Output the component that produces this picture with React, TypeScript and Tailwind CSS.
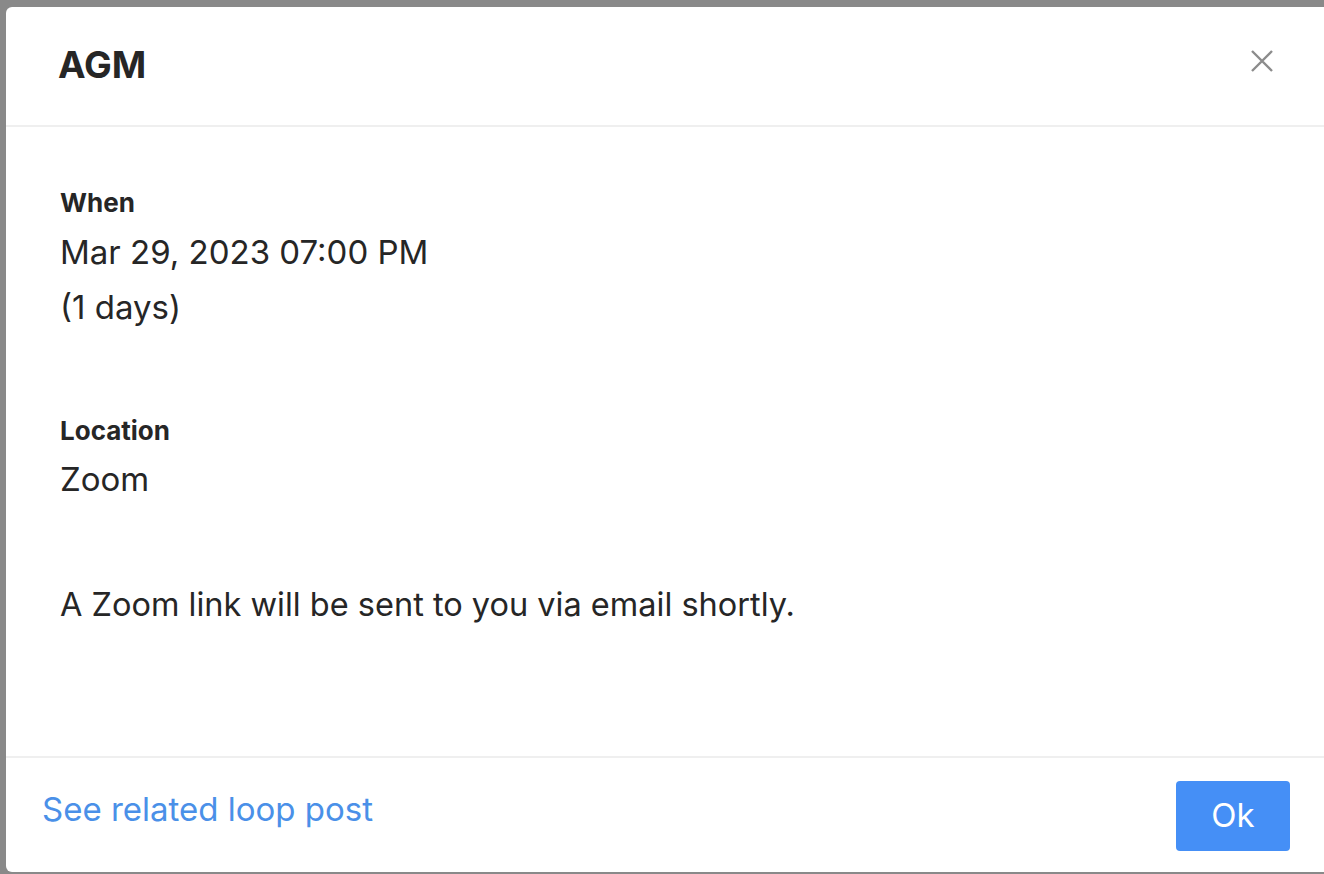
export default function App() {
  return (
    <div
      className="h-screen w-full overflow-hidden bg-[#898989] pl-[6px] pt-[7px]"
      style={{ fontFamily: 'Inter, "Open Sans", sans-serif' }}
    >
      <div className="flex h-[865px] flex-col rounded-l-md bg-white text-[#262626]">
        {/* Header */}
        <div className="flex h-[120px] shrink-0 items-center justify-between border-b-2 border-[#efefef] pl-[52px] pr-[50px]">
          <h2 className="mb-[4px] text-[37px] font-bold leading-none">AGM</h2>
          <button className="mb-[10px] text-[#8c8c8c]" aria-label="Close">
            <svg width="24" height="24" viewBox="0 0 24 24" fill="none" stroke="currentColor" strokeWidth="2.4">
              <path d="M2 2 L22 22 M22 2 L2 22" />
            </svg>
          </button>
        </div>

        {/* Body */}
        <div className="flex-1 pl-[54px] pt-[60px]">
          <div className="text-[26px] font-bold leading-[32px]">When</div>
          <div className="mt-[11px] text-[33px] leading-[44px]">Mar 29, 2023 07:00 PM</div>
          <div className="mt-[11px] text-[33px] leading-[44px]">(1 days)</div>

          <div className="mt-[86px] text-[26px] font-bold leading-[32px]">Location</div>
          <div className="mt-[10px] text-[33px] leading-[44px]">Zoom</div>

          <p className="mt-[82px] text-[32.5px] leading-[44px]">A Zoom link will be sent to you via email shortly.</p>
        </div>

        {/* Footer */}
        <div className="flex h-[116px] shrink-0 items-start justify-between border-t-2 border-[#efefef] pl-[36px] pr-[34px] pt-[23px]">
          <a href="#" className="mt-[6px] text-[33px] leading-[44px] text-[#4a90e8]">
            See related loop post
          </a>
          <button className="h-[70px] w-[114px] rounded-[4px] bg-[#458ff6] text-[33px] text-white">
            Ok
          </button>
        </div>
      </div>
    </div>
  );
}
